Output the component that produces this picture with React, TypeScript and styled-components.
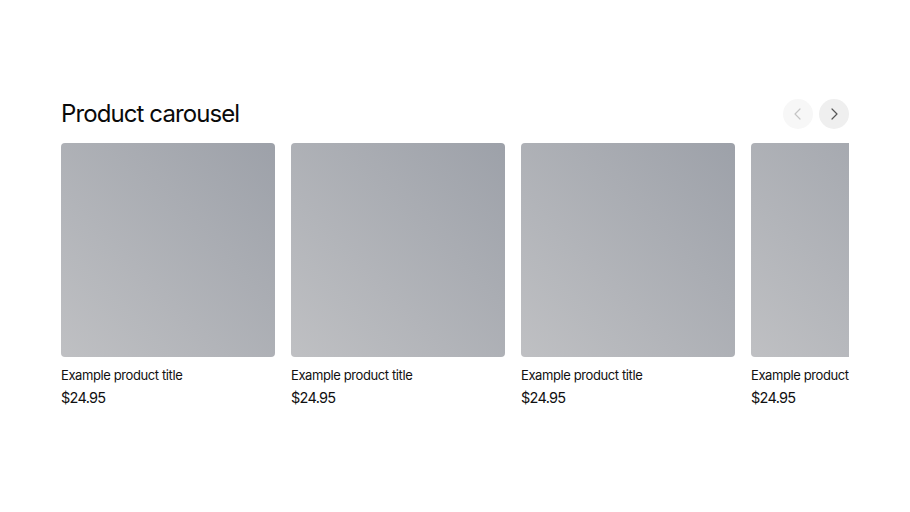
import { createGlobalStyle, styled } from "styled-components";

const GlobalStyle = createGlobalStyle`
  body {
    margin: 0;
    background: #ffffff;
    font-family: Inter, "Noto Sans", sans-serif;
    color: #111111;
  }
`;

const products = Array.from({ length: 5 }, (_, i) => ({
  id: i,
  title: "Example product title",
  price: "$24.95",
}));

const Chevron = ({ dir }: { dir: "left" | "right" }) => (
  <svg width="16" height="16" viewBox="0 0 16 16" fill="none">
    <path
      d={dir === "left" ? "M10 3 L5 8 L10 13" : "M6 3 L11 8 L6 13"}
      stroke="currentColor"
      strokeWidth="1.2"
      strokeLinecap="round"
      strokeLinejoin="round"
    />
  </svg>
);

const App = () => {
  return (
    <>
      <GlobalStyle />
      <Page>
        <Section>
          <Header>
            <Title>Product carousel</Title>
            <Controls>
              <NavButton disabled aria-label="Previous">
                <Chevron dir="left" />
              </NavButton>
              <NavButton aria-label="Next">
                <Chevron dir="right" />
              </NavButton>
            </Controls>
          </Header>
          <Track>
            {products.map((p) => (
              <Card key={p.id}>
                <Thumb />
                <ProductTitle>{p.title}</ProductTitle>
                <Price>{p.price}</Price>
              </Card>
            ))}
          </Track>
        </Section>
      </Page>
    </>
  );
};
export default App;

const Page = styled.div`
  width: 910px;
  height: 512px;
  display: flex;
  justify-content: center;
  padding-top: 98px;
  box-sizing: border-box;
`;

const Section = styled.section`
  width: 788px;
  display: flex;
  flex-direction: column;
  gap: 14px;
`;

const Header = styled.div`
  display: flex;
  justify-content: space-between;
  align-items: center;
  height: 31px;
`;

const Title = styled.h2`
  margin: 0;
  font-size: 24px;
  font-weight: 400;
  letter-spacing: -0.9px;
  color: #0a0a0a;
`;

const Controls = styled.div`
  display: flex;
  gap: 6px;
`;

const NavButton = styled.button`
  width: 30px;
  height: 30px;
  border-radius: 50%;
  border: none;
  padding: 0;
  display: flex;
  align-items: center;
  justify-content: center;
  background: ${(p) => (p.disabled ? "#f7f7f7" : "#efefef")};
  color: ${(p) => (p.disabled ? "#c4c4c4" : "#555555")};
  cursor: pointer;
`;

const Track = styled.div`
  display: flex;
  gap: 16px;
  overflow: hidden;
`;

const Card = styled.div`
  flex: 0 0 214px;
  display: flex;
  flex-direction: column;
`;

const Thumb = styled.div`
  width: 214px;
  height: 214px;
  border-radius: 4px;
  background: linear-gradient(to top right, #bfc0c3, #9da1a9);
`;

const ProductTitle = styled.div`
  margin-top: 10px;
  font-size: 13px;
  line-height: 16px;
  letter-spacing: -0.4px;
  white-space: nowrap;
  overflow: hidden;
  color: #111111;
`;

const Price = styled.div`
  margin-top: 5px;
  font-size: 14.5px;
  line-height: 20px;
  letter-spacing: -0.7px;
  color: #111111;
`;
